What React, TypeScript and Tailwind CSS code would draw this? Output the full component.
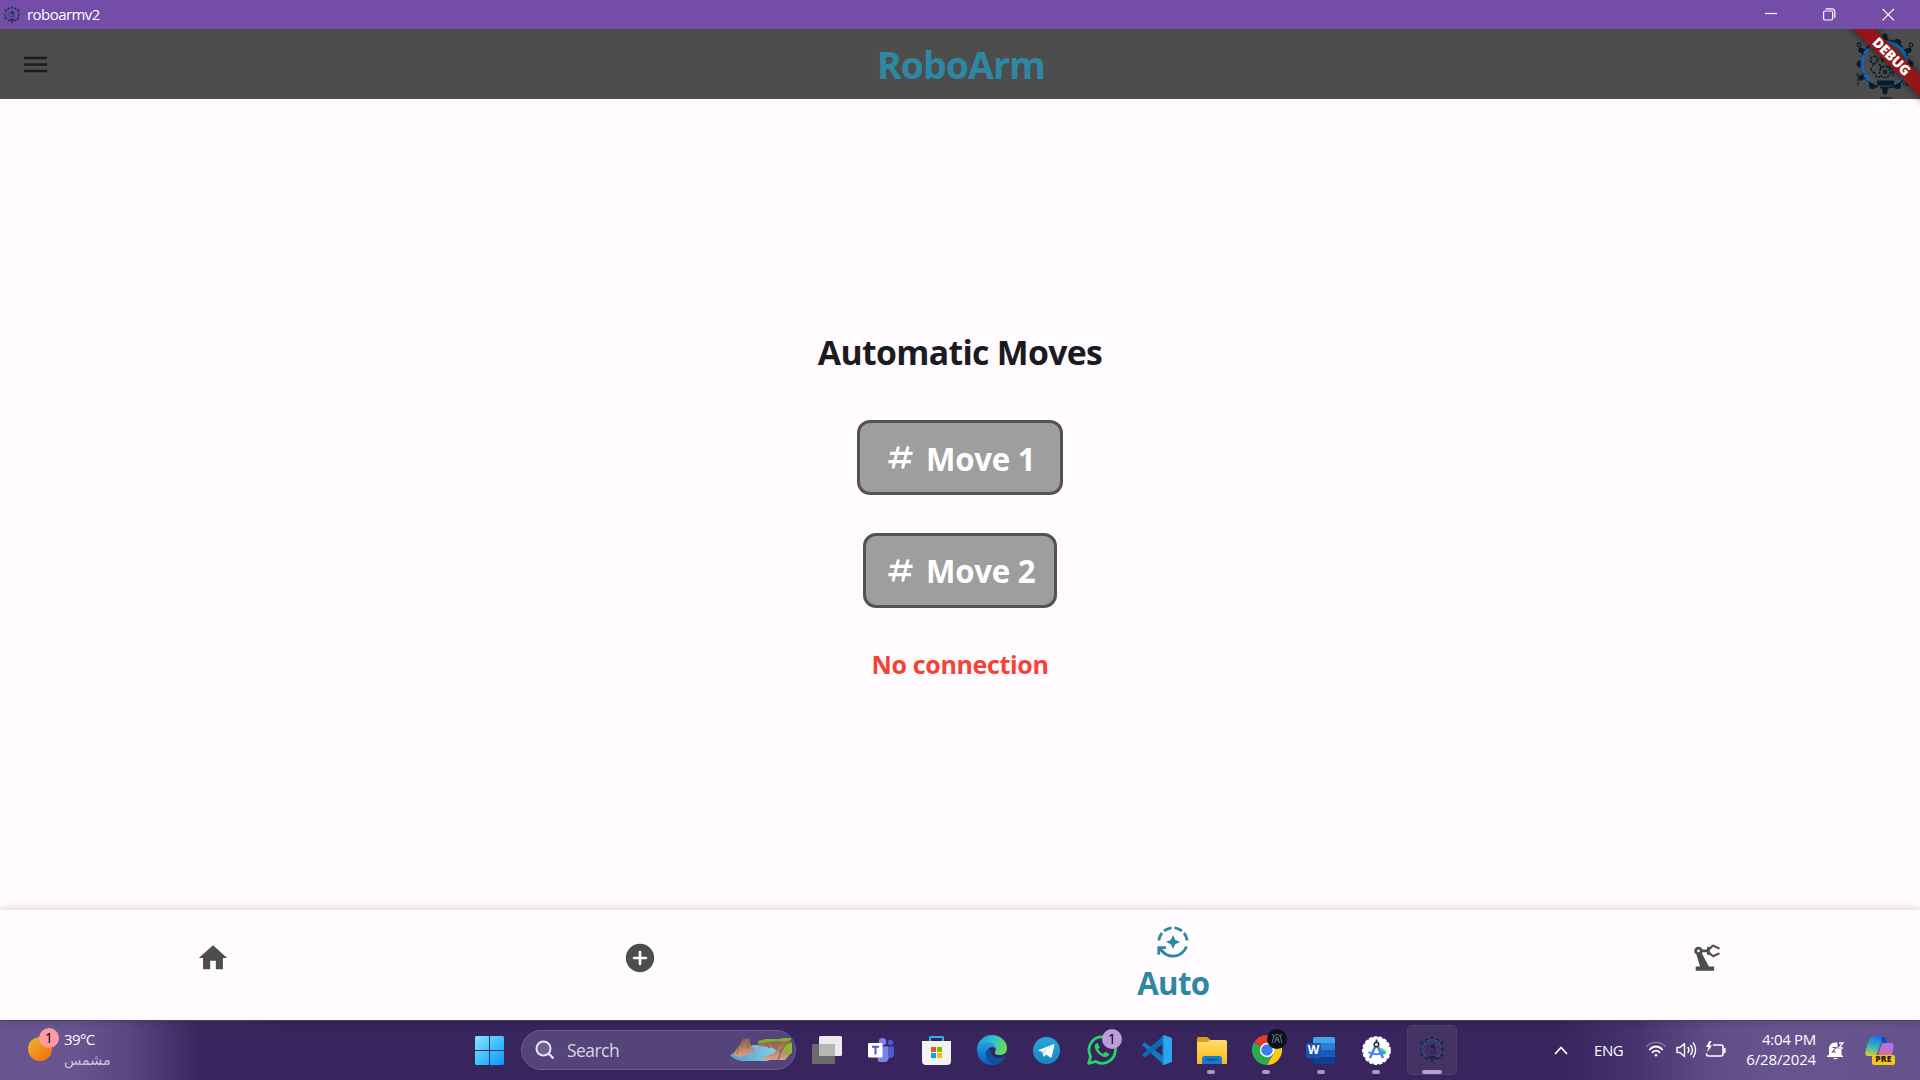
import React from "react";
import { MdAutoMode, MdHome, MdMenu, MdPrecisionManufacturing } from "react-icons/md";

const KNOBS = [0, 30, 60, 90, 120, 150, 180, 210, 240, 270, 300, 330];

function GearLogo({ size, dark = "#071d2f", blue = "#1c64b0" }: { size: number; dark?: string; blue?: string }) {
  return (
    <svg width={size} height={size} viewBox="0 0 64 66" fill="none" className="shrink-0">
      {KNOBS.map((a) => (
        <g key={a} transform={`rotate(${a} 32 31)`}>
          {a % 60 === 30 ? (
            <path d="M27.500 8l1.500-4q3-3 6 0l1.500 4z" fill={dark} />
          ) : (
            <path d="M27 8.500l2.500-2.500V3a2.500 2.500 0 0 1 5 0v3L37 8.500z" fill={dark} />
          )}
        </g>
      ))}
      <g stroke={dark} strokeWidth="1.200">
        <circle cx="6" cy="12" r="1.800" />
        <circle cx="58" cy="12" r="1.800" />
        <path d="M5 40v12M3 42h4M4 52h3M50 51h9M54 48v6" strokeDasharray="2 1" />
      </g>
      <circle cx="32" cy="31" r="24" stroke={dark} strokeWidth="1.800" strokeDasharray="6 3" />
      <path d="M17 48A22 22 0 0 1 15 16M20 12.500A22 22 0 0 1 54 29M53.500 36A22 22 0 0 1 44 49.500" stroke={blue} strokeWidth="3.200" strokeDasharray="9 .8" />
      <g stroke={dark} strokeWidth="1.600">
        <circle cx="21" cy="27" r="3.600" strokeDasharray="3 1" />
        <path d="M21 31c-3 3-4 6-1 8s4 3 3 6" strokeDasharray="3 1.500" />
        <circle cx="32" cy="39" r="5.500" strokeDasharray="2.500 1.200" />
        <circle cx="32" cy="39" r="1.500" />
        <path d="M26 31l3 4M39 30l-3 5" />
        <path d="M40 35v9M25 44h3" strokeDasharray="2 1" />
      </g>
      <path d="M27 22l6-3 6 4 1 6-3 2-4-4-4 2zM24 47.500h17v5H24z" fill={dark} />
      <path d="M27 65h12" stroke={dark} strokeWidth="1.300" strokeDasharray="2.500 .8" />
    </svg>
  );
}

function TitleBar() {
  return (
    <div className="flex h-[29px] items-center bg-[#744da9] pl-[3px] text-white">
      <GearLogo size={18} dark="#1d2440" blue="#2b62ac" />
      <span className="ml-[6px] mt-[-1px] text-[15px] leading-[20px] tracking-[-0.55px]">roboarmv2</span>
      <svg className="ml-auto mr-[25px]" width="130" height="13" viewBox="0 0 130 13" fill="none" stroke="white" strokeWidth="1.200">
        <path d="M0 5.500h12" />
        <rect x="58.600" y="3" width="9" height="9" rx="1.500" />
        <path d="M60.500 .9h6.500a2.800 2.800 0 0 1 2.800 2.800V10" />
        <path d="M117.500 .8l11.500 11.500M129 .8l-11.500 11.500" />
      </svg>
    </div>
  );
}

function AppBar() {
  return (
    <header className="relative flex h-[70px] items-center justify-between bg-[#4d4d4d]">
      <div className="flex w-[70px] justify-center">
        <MdMenu className="size-[31px] text-[#1c1b1f]" />
      </div>
      <h1 className="mt-[2px] pl-[3px] text-[37.500px] font-bold leading-[50px] tracking-[-0.95px] text-[#2f88a3]">RoboArm</h1>
      <div className="flex w-[71px] justify-center pt-[3px]">
        <GearLogo size={66} />
      </div>
      <div className="absolute right-0 top-0 h-[78px] w-[90px] overflow-hidden">
        <div className="absolute left-[-17px] top-[22px] flex h-[15px] w-[160px] rotate-45 items-center justify-center bg-[#931719] pr-[5px] text-[13.900px] font-extrabold tracking-[-0.2px] text-white shadow-[0_0_8px_rgba(0,0,0,0.6)]">
          DEBUG
        </div>
      </div>
    </header>
  );
}

function HashIcon() {
  return (
    <svg width="33" height="33" viewBox="0 0 24 24" fill="none" stroke="white" strokeWidth="2.200" className="shrink-0">
      <path d="M10.500 4l-4 16M17.500 4l-4 16M4.300 9h16.500M3.200 15h16.500" />
    </svg>
  );
}

function MoveButton({ label, className }: { label: string; className: string }) {
  return (
    <button
      className={`flex h-[75px] items-center rounded-[13px] border-[3px] border-[#535353] bg-[#9e9e9e] text-white ${className}`}
    >
      <HashIcon />
      <span className="ml-[9px] mt-[2px] whitespace-nowrap text-[31.250px] font-bold leading-[42px] tracking-[-0.3px]">{label}</span>
    </button>
  );
}

function BottomNav() {
  return (
    <nav className="relative grid h-[110px] grid-cols-[2fr_2fr_3fr_2fr] bg-[#fffbff] text-[#4d4d4d] shadow-[0_0_9px_rgba(0,0,0,0.22),0_-0.500px_1px_rgba(0,0,0,0.12)]">
      <div className="flex items-center justify-center pb-[14px]">
        <MdHome className="size-[34px]" />
      </div>
      <div className="flex items-center justify-center pb-[14px]">
        <svg width="34" height="34" viewBox="0 0 24 24" fill="none">
          <circle cx="12" cy="12" r="10" fill="currentColor" />
          <path d="M12 7.800v8.400M7.800 12h8.400" stroke="#fffbff" strokeWidth="1.900" strokeLinecap="round" />
        </svg>
      </div>
      <div className="flex flex-col items-center pt-[15px] text-[#2f88a3]">
        <MdAutoMode className="size-[34px]" />
        <span className="mt-[3px] text-[31.250px] font-bold leading-[42px] tracking-[-0.7px]">Auto</span>
      </div>
      <div className="flex items-center justify-center pb-[14px]">
        <MdPrecisionManufacturing className="size-[34px]" />
      </div>
    </nav>
  );
}

function RocksArt() {
  return (
    <svg width="62" height="24" viewBox="0 0 62 24">
      <defs>
        <linearGradient id="rock" x1="0" y1="0" x2="0" y2="1">
          <stop offset="0" stopColor="#8c604b" />
          <stop offset="1" stopColor="#dba287" />
        </linearGradient>
        <linearGradient id="water" x1="0" y1="0" x2="1" y2="0">
          <stop offset="0" stopColor="#4f9fc8" />
          <stop offset="1" stopColor="#8fd2e8" />
        </linearGradient>
      </defs>
      <path d="M0 17l5-3 18-7h10l18 5-6 8-8 3H11Q3 21 0 17z" fill="url(#water)" />
      <path d="M3 17L7 10l3-3 3-6 6-1 2 9 4 2v2l-6 3-9 3z" fill="url(#rock)" />
      <path d="M14 2l-2 8M19 1l-2 10M9 8l-2 8" stroke="#8f6250" strokeWidth="1" />
      <path d="M28 4l32-2 2 3v9l-7 8H36l-4-2 12-5 3-4-9-2-9-1z" fill="url(#rock)" />
      <path d="M36 4l3 6M43 3l2 8M49 4l-3 8M52 12l-4 10M56 8l-7 6" stroke="#8f6250" strokeWidth="1.200" />
      <path d="M28 3l8-2h13l4-1 8-1v3l-6 2-7-1-9 1-11 1z" fill="#7db32c" />
      <path d="M54 10l4-4 4-1v10l-4 1-1-3-4 1z" fill="#86bd2e" />
    </svg>
  );
}

function Cell({ children, mark, badge }: { children: React.ReactNode; mark?: boolean; badge?: React.ReactNode }) {
  return (
    <div className="relative flex h-full w-[55px] shrink-0 items-center justify-center">
      {children}
      {badge}
      {mark && <span className="absolute bottom-[6px] left-[23px] h-[4px] w-[8px] rounded-full bg-[#a79bbd]" />}
    </div>
  );
}

function WindowsIcon() {
  return (
    <svg width="29" height="29" viewBox="0 0 29 29">
      <defs>
        <linearGradient id="win" x1="0" y1="0" x2="1" y2="1">
          <stop offset="0" stopColor="#8be3ff" />
          <stop offset=".5" stopColor="#3fc3fb" />
          <stop offset="1" stopColor="#0a94fb" />
        </linearGradient>
      </defs>
      <path d="M1 0h13v14H0V1zM15 0h13l1 1v13H15zM0 15h14v14H1l-1-1zM15 15h14v13l-1 1H15z" fill="url(#win)" />
    </svg>
  );
}

function TaskViewIcon() {
  return (
    <svg width="30" height="28" viewBox="0 0 30 28">
      <rect x="0" y="8" width="23" height="20" rx="1.500" fill="#6a6a6a" />
      <rect x="7" y="0" width="23" height="20" rx="1.500" fill="#ececec" />
      <path d="M7 8h16v12H8.500A1.500 1.500 0 0 1 7 18.500z" fill="#b6b6b6" />
    </svg>
  );
}

function TeamsIcon() {
  return (
    <svg width="27" height="24" viewBox="0 0 27 24">
      <circle cx="22.500" cy="4.500" r="2.700" fill="#5059c9" />
      <path d="M18 8.500h8v7a4 4 0 0 1-8 1z" fill="#5059c9" />
      <circle cx="14.500" cy="3.800" r="3.700" fill="#7b83eb" />
      <path d="M8 8.500h12v8a6 6 0 0 1-10 6.500z" fill="#7b83eb" />
      <rect x="0" y="5" width="14.500" height="14.500" rx="1" fill="#fff" />
      <path d="M4 8.800h7M7.500 9v7.500" stroke="#5059c9" strokeWidth="2" />
    </svg>
  );
}

function StoreIcon() {
  return (
    <svg width="29" height="29" viewBox="0 0 29 29">
      <path d="M8 6V1.500Q8 1 8.500 1h12q.5 0 .5.500V6" fill="none" stroke="#2bb5ee" strokeWidth="2" />
      <path d="M0 5h29v20a4 4 0 0 1-4 4H4a4 4 0 0 1-4-4z" fill="#f3f3f3" />
      <path d="M9 11h5v5H9z" fill="#f25022" />
      <path d="M15 11h5v5h-5z" fill="#7fba00" />
      <path d="M9 17h5v5H9z" fill="#00a4ef" />
      <path d="M15 17h5v5h-5z" fill="#ffb900" />
    </svg>
  );
}

function EdgeIcon() {
  return (
    <svg width="30" height="30" viewBox="0 0 30 30">
      <defs>
        <linearGradient id="edgeTop" x1="0" y1=".3" x2="1" y2=".5">
          <stop offset="0" stopColor="#1b9de2" />
          <stop offset=".55" stopColor="#35c1c9" />
          <stop offset="1" stopColor="#6adf4f" />
        </linearGradient>
        <linearGradient id="edgeLeft" x1="0" y1="0" x2="0" y2="1">
          <stop offset="0" stopColor="#1fa2e4" />
          <stop offset="1" stopColor="#0a5bb5" />
        </linearGradient>
      </defs>
      <path d="M0 15C0 6 7 0 15 0s15 6 15 13c0 5-3.500 7-7 7-4 0-6-1.500-5-3 2-3 0-7-4-7-6 0-12 3-14 5z" fill="url(#edgeTop)" />
      <path d="M0 15c0-5 5-8 10-8 4 0 8 2 8 6-5-3-9 2-7 7s7 8 13 6c-2 2.500-5.500 4-9 4C7 30 0 24 0 15z" fill="url(#edgeLeft)" />
      <path d="M11 14c-4 3-3 14 7 15.500 4-.5 8-3 10-7 .4-.8-.3-1-1-.7-6 3-14 .2-13-5.800z" fill="#1150a0" />
    </svg>
  );
}

function TelegramIcon() {
  return (
    <svg width="27" height="27" viewBox="0 0 27 27">
      <defs>
        <linearGradient id="tg" x1="0" y1="0" x2="0" y2="1">
          <stop offset="0" stopColor="#2ba6df" />
          <stop offset="1" stopColor="#1785c4" />
        </linearGradient>
      </defs>
      <circle cx="13.500" cy="13.500" r="13.500" fill="url(#tg)" />
      <path d="M5 13.200L20.500 7.300c.5-.2 1 .1.900.8l-2.700 12c-.2.800-.8.900-1.400.5L13 17.500l-2 2c-.4.300-.8.200-.9-.4L9.500 15z" fill="#fff" />
      <path d="M9.500 15l8-5.500-6.300 6.500-.7 3.500z" fill="#bcdcf0" />
    </svg>
  );
}

function WhatsAppIcon() {
  return (
    <svg width="30" height="30" viewBox="0 0 30 30" fill="none">
      <path d="M1.700 28.300l1.900-7A13.200 13.200 0 1 1 8.700 26.500z" stroke="#25d366" strokeWidth="2.800" strokeLinejoin="round" />
      <path d="M10.500 8c-1.500 0-2.800 1.500-2.800 3.500 0 4.500 6 10.500 10.500 10.500 2.500 0 4-1.500 4-3.200l-4-2-2 2.200c-2-.8-4-2.700-5-4.800l1.600-2z" fill="#25d366" />
    </svg>
  );
}

function VsCodeIcon() {
  return (
    <svg width="30" height="30" viewBox="0 0 30 30">
      <path d="M0 9.500L2.500 7.300 22 22v8L1 11z" fill="#0f79c4" />
      <path d="M0 20.500l2.500 2.200L22 8V0L1 19z" fill="#0b6bb3" />
      <path d="M22 0l8 3v24l-8 3z" fill="#2aa5ee" />
      <path d="M20.500 1L22 0v30l-1.500-1z" fill="#1c8fdb" />
    </svg>
  );
}

function FolderIcon() {
  return (
    <svg width="30" height="27" viewBox="0 0 30 27">
      <defs>
        <linearGradient id="fold" x1="0" y1="0" x2="0" y2="1">
          <stop offset="0" stopColor="#ffdd6c" />
          <stop offset="1" stopColor="#fbb917" />
        </linearGradient>
      </defs>
      <path d="M0 1.500Q0 0 1.500 0h8q1 0 1.800.8L14 3.500V8H0z" fill="#dc9b10" />
      <path d="M0 5h9.500L13 3h15.500Q30 3 30 4.500V27H0z" fill="url(#fold)" />
      <path d="M5 27v-5a3 3 0 0 1 3-3h14a3 3 0 0 1 3 3v5z" fill="#1579cf" />
      <path d="M9 22.700h12" stroke="#0b4c8d" strokeWidth="1.200" />
    </svg>
  );
}

function ChromeIcon() {
  return (
    <svg width="30" height="30" viewBox="0 0 30 30">
      <path d="M15 15L2 7.500A15 15 0 0 1 28 7.500H15z" fill="#e33b2e" />
      <path d="M15 15L2 7.500A15 15 0 0 0 15 30l6.500-11.300z" fill="#2da94f" />
      <path d="M15 7.500h13A15 15 0 0 1 15 30l6.500-11.300z" fill="#fdc71c" />
      <circle cx="15" cy="15" r="7.200" fill="#fff" />
      <circle cx="15" cy="15" r="5.700" fill="#3b7ded" />
    </svg>
  );
}

function WordIcon() {
  return (
    <div className="relative mr-[2px] h-[27px] w-[29px]">
      <div className="ml-[7px] flex h-full w-[22px] flex-col overflow-hidden rounded-[2px]">
        <span className="flex-1 bg-[#41a5ee]" />
        <span className="flex-1 bg-[#2b7cd3]" />
        <span className="flex-1 bg-[#185abd]" />
        <span className="flex-1 bg-[#103f91]" />
      </div>
      <span className="absolute left-0 top-[6px] flex size-[15px] items-center justify-center rounded-[2px] bg-[#1b54b0] text-[12px] font-bold leading-none text-white">W</span>
    </div>
  );
}

function AndroidStudioIcon() {
  return (
    <svg width="29" height="29" viewBox="0 0 29 29" fill="none">
      <circle cx="14.500" cy="14.500" r="13.400" fill="#fff" stroke="#fff" strokeWidth="2" strokeDasharray="3.500 1.500" />
      <path d="M18 12a5.500 5.500 0 0 1 6 6l-4 1z" fill="#3ddc84" />
      <path d="M13.500 10L8 22M15.500 10L21 22" stroke="#4285f4" strokeWidth="2.600" />
      <path d="M6.500 16c4 3 12 3 16 0" stroke="#4285f4" strokeWidth="2" />
      <circle cx="14.500" cy="8.500" r="2.300" fill="#fff" stroke="#17303f" strokeWidth="1.500" />
      <path d="M14.500 3.500v3" stroke="#17303f" strokeWidth="1.800" />
    </svg>
  );
}

function TrayIcons() {
  return (
    <svg width="80" height="24" viewBox="0 0 80 24" fill="none" stroke="#fff" strokeWidth="1.400" strokeLinecap="round">
      <path d="M.8 8.500c5-5.500 13.400-5.500 18.400 0" stroke="#8b7ba8" />
      <path d="M3.800 11.500c3.600-4 8.800-4 12.400 0M6.500 14.300c2.200-2.200 4.800-2.200 7 0" strokeWidth="1.800" />
      <circle cx="10" cy="17.200" r="1.300" fill="#fff" stroke="none" />
      <path d="M31 9.500h3l4.500-4v13l-4.500-4h-3z" strokeLinejoin="round" />
      <path d="M42 9.500c1.200 1.500 1.200 3.500 0 5M44.800 7.500c2 2.700 2 6.300 0 9M47.300 5c3 4 3 10 0 14" />
      <path d="M67.500 7H75a2 2 0 0 1 2 2v7a2 2 0 0 1-2 2H62.500a2 2 0 0 1-2-2" strokeWidth="1.600" />
      <path d="M78.800 10.500v4" strokeWidth="1.600" />
      <path d="M63.500 3l-3.500 6h2.500l-1.500 5.500 5-7h-2.500l2-4.500z" fill="#fff" stroke="none" />
    </svg>
  );
}

function BellIcon() {
  return (
    <svg width="18" height="19" viewBox="0 0 18 19">
      <path d="M2 8a6 6 0 0 1 6-6.500c4 0 6.500 2.500 6.500 6.500v6l1.500 1v1H0v-1l2-1.500zM6 17h5q-2.500 2.500-5 0z" fill="#fff" />
      <path d="M5.500 6.500H9l-3.500 4.500H9" stroke="#65528c" strokeWidth="1.200" fill="none" />
      <path d="M10.500 .5H17V8h-6.500z" fill="#65528c" />
      <path d="M12 2h4l-4 5h4" stroke="#fff" strokeWidth="1.300" fill="none" />
    </svg>
  );
}

function CopilotIcon() {
  return (
    <div className="relative h-[29px] w-[30px]">
      <svg width="30" height="27" viewBox="0 0 30 27">
        <defs>
          <linearGradient id="cpA" x1=".5" y1="0" x2=".2" y2="1">
            <stop offset="0" stopColor="#1b6fe0" />
            <stop offset=".5" stopColor="#2fb3c4" />
            <stop offset="1" stopColor="#d9cf3a" />
          </linearGradient>
          <linearGradient id="cpB" x1=".8" y1="0" x2=".2" y2="1">
            <stop offset="0" stopColor="#a878f0" />
            <stop offset="1" stopColor="#f0658a" />
          </linearGradient>
        </defs>
        <path d="M8 0h10q2.500 0 3.300 3L22 6h-4q-2 0-2.700 2.500L12 18q-.8 2-3 2H3q-3 0-2.600-3.500Q2 8 5 2 6 0 8 0z" fill="url(#cpA)" />
        <path d="M16 1h2q2.500 0 3.300 3L22 7h-5z" fill="#1845b8" />
        <path d="M19 7h7q3 0 2.600 3.500Q28 17 25 23h-13l4-13q.8-3 3-3z" fill="url(#cpB)" />
      </svg>
      <span className="absolute bottom-0 left-[7px] flex h-[10px] w-[23px] items-center justify-center rounded-[2px] bg-[#f8c712] text-[8.500px] font-extrabold leading-none tracking-[0.3px] text-[#2b2110]">
        PRE
      </span>
    </div>
  );
}

function Taskbar() {
  return (
    <div className="flex h-[60px] items-center bg-[linear-gradient(90deg,#68548f_0px,#68548f_75px,#5c4783_125px,#3b275f_200px,#38255d_300px,#38255d_1560px,#48346e_1640px,#614c87_1710px,#68548f_1780px,#66528c_1920px)] text-white shadow-[inset_0_1px_0_#55456f]">
      <div className="relative flex w-[475px] items-center pl-[28px]">
        <div className="relative mt-[-3px] size-[24px] rounded-full bg-[linear-gradient(135deg,#e8bb2e,#f0941f_45%,#f26a0c)]">
          <span className="absolute left-[11px] top-[-9px] flex size-[20px] items-center justify-center rounded-full bg-[#ff99a4] text-[14.500px] text-black">1</span>
        </div>
        <div className="ml-[12px] mt-[-2px] flex flex-col">
          <span className="text-[15px] leading-[20px] tracking-[-0.6px]">39°C</span>
          <span dir="rtl" className="relative top-px font-['DejaVu_Sans',sans-serif] text-[14.200px] leading-[20px] text-[#cdc4dc]">مشمس</span>
        </div>
      </div>
      <WindowsIcon />
      <div className="ml-[17px] flex h-[40px] w-[275px] items-center rounded-full border border-[#6d5c8c] bg-[#54447a] pl-[13px] pr-[3px]">
        <svg width="20" height="20" viewBox="0 0 20 20" fill="none" stroke="#e9e5f0" strokeWidth="2">
          <circle cx="8.500" cy="8.500" r="7" fill="#6e6090" />
          <path d="M13.500 13.500l5 5" strokeWidth="2.400" />
        </svg>
        <span className="ml-[12px] mr-auto text-[17.500px] leading-[24px] tracking-[-0.55px] text-[#d9d4e3]">Search</span>
        <RocksArt />
      </div>
      <div className="ml-[3px] flex h-full items-center">
        <Cell><TaskViewIcon /></Cell>
        <Cell><TeamsIcon /></Cell>
        <Cell><StoreIcon /></Cell>
        <Cell><EdgeIcon /></Cell>
        <Cell><TelegramIcon /></Cell>
        <Cell badge={<span className="absolute left-[28px] top-[9px] flex size-[20px] items-center justify-center rounded-full bg-[#bb9ed7] text-[14.500px] text-black">1</span>}>
          <WhatsAppIcon />
        </Cell>
        <Cell><VsCodeIcon /></Cell>
        <Cell mark><FolderIcon /></Cell>
        <Cell
          mark
          badge={
            <svg className="absolute left-[28px] top-[9px]" width="20" height="20" viewBox="0 0 20 20" fill="none">
              <circle cx="10" cy="10" r="10" fill="#07121c" />
              <path d="M5 14l2-7 3-2 3 2 2 7M7.500 14l2-6h1l2 6M7 7L5 5M13 7l2-2M8 11h4" stroke="#6c7a83" strokeWidth="1" />
            </svg>
          }
        >
          <ChromeIcon />
        </Cell>
        <Cell mark><WordIcon /></Cell>
        <Cell mark><AndroidStudioIcon /></Cell>
        <Cell>
          <div className="relative flex size-[50px] items-center justify-center rounded-[5px] border border-[#4d3d70] bg-[#443465]">
            <GearLogo size={28} dark="#241f42" blue="#2c5592" />
            <span className="absolute bottom-0 left-[14px] h-[4px] w-[20px] rounded-full bg-[#bb9ed7]" />
          </div>
        </Cell>
      </div>
      <svg className="ml-[95px]" width="14" height="9" viewBox="0 0 14 9" fill="none" stroke="#fff" strokeWidth="1.800">
        <path d="M1 8l6-6.500L13 8" />
      </svg>
      <span className="ml-[26px] mt-[-1px] w-[30px] text-[15px] leading-[20px] tracking-[-0.4px]">ENG</span>
      <div className="ml-[22px]">
        <TrayIcons />
      </div>
      <div className="ml-auto mt-[-2px] flex w-[90px] flex-col items-end text-[15px] leading-[20px]">
        <span className="tracking-[-0.3px]">4:04 PM</span>
        <span className="tracking-[-0.15px]">6/28/2024</span>
      </div>
      <div className="ml-[11px]">
        <BellIcon />
      </div>
      <div className="ml-[20px] mr-[25px]">
        <CopilotIcon />
      </div>
    </div>
  );
}

export default function App() {
  return (
    <div className="flex h-[1080px] w-[1920px] flex-col overflow-hidden bg-[#fffbff] font-['Open_Sans','Noto_Sans',sans-serif]">
      <TitleBar />
      <AppBar />
      <main className="flex h-[811px] flex-col items-center pt-[230px]">
        <h2 className="text-[33.750px] font-bold leading-[46px] tracking-[-0.65px] text-[#1c1b1f]">Automatic Moves</h2>
        <MoveButton label="Move 1" className="mt-[45px] w-[206px] pl-[24px]" />
        <MoveButton label="Move 2" className="mt-[37.500px] w-[194px] pl-[18px]" />
        <p className="mt-[39.500px] text-[25px] font-bold leading-[34px] tracking-[-0.35px] text-[#f44336]">No connection</p>
      </main>
      <BottomNav />
      <Taskbar />
    </div>
  );
}
